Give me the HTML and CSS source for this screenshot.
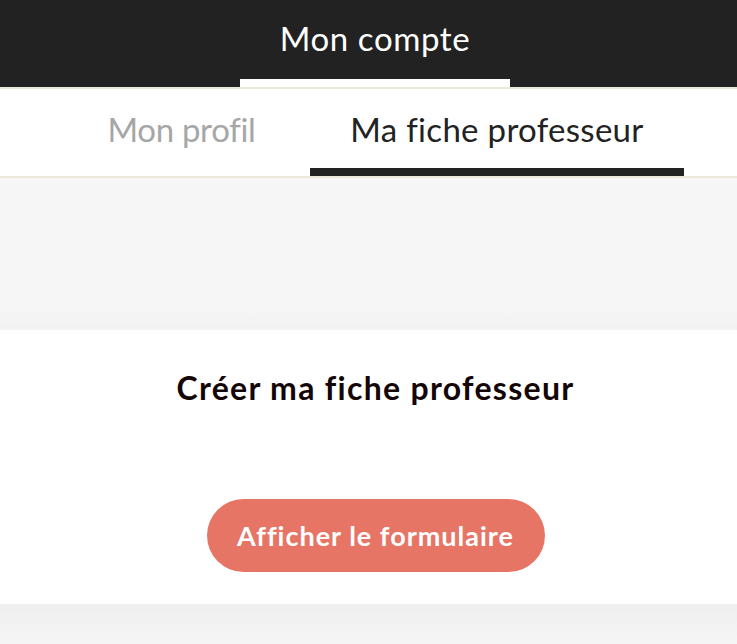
FILE: index.html
```html
<!DOCTYPE html>
<html lang="fr">
<head>
<meta charset="utf-8">
<link rel="stylesheet" href="styles.css">
</head>
<body>
<header class="top">
  <nav class="top-nav">
    <a class="top-tab active">Mon compte</a>
  </nav>
</header>
<nav class="subnav">
  <a class="sub-tab profil">Mon profil</a>
  <a class="sub-tab fiche active">Ma fiche professeur</a>
</nav>
<div class="spacer"></div>
<section class="card">
  <h1 class="card-title">Créer ma fiche professeur</h1>
  <button class="btn">Afficher le formulaire</button>
</section>
<div class="bottom"></div>
</body>
</html>
```
FILE: styles.css
```css
* { box-sizing: border-box; }
html, body { margin: 0; padding: 0; }
body {
  font-family: Lato, "Noto Sans", sans-serif;
  background: #f5f5f5;
  width: 737px;
  overflow: hidden;
}
.top {
  background: #222222;
  height: 87px;
  display: flex;
  justify-content: flex-start;
}
.top-nav {
  display: flex;
  margin-left: 240px;
}
.top-tab {
  width: 270px;
  height: 87px;
  color: #fff;
  font-size: 33px;
  letter-spacing: 0.6px;
  display: flex;
  justify-content: center;
  padding-top: 18px;
  border-bottom: 8px solid #fff;
  line-height: 40px;
}
.subnav {
  background: #fff;
  border-top: 2px solid #ece8dc;
  border-bottom: 2px solid #ece8dc;
  height: 91px;
  display: flex;
}
.sub-tab {
  height: 87px;
  font-size: 33px;
  line-height: 40px;
  padding-top: 20px;
  display: flex;
  justify-content: center;
}
.profil {
  color: #a6a6a6;
  width: 229px;
  margin-left: 67px;
  letter-spacing: -0.3px;
}
.fiche {
  color: #222;
  width: 374px;
  margin-left: 14px;
  letter-spacing: 0.3px;
  border-bottom: 8px solid #222;
}
.spacer {
  height: 152px;
  background: linear-gradient(#f6f6f6 0, #f6f6f6 85%, #f2f2f2 100%);
}
.card {
  background: #fff;
  height: 274px;
  display: flex;
  flex-direction: column;
  align-items: center;
  padding-top: 38px;
  padding-left: 14px;
}
.card-title {
  margin: 0;
  font-size: 32px;
  font-weight: 700;
  letter-spacing: 1.3px;
  color: #140606;
  line-height: 40px;
}
.btn {
  margin-top: 91px;
  width: 338px;
  height: 73px;
  border: none;
  border-radius: 37px;
  background: #e77565;
  color: #fff;
  font-family: Lato, "Noto Sans", sans-serif;
  font-weight: 700;
  font-size: 27px;
  letter-spacing: 1px;
}
.bottom {
  height: 40px;
  background: linear-gradient(#efefef, #f5f5f5);
}
```
